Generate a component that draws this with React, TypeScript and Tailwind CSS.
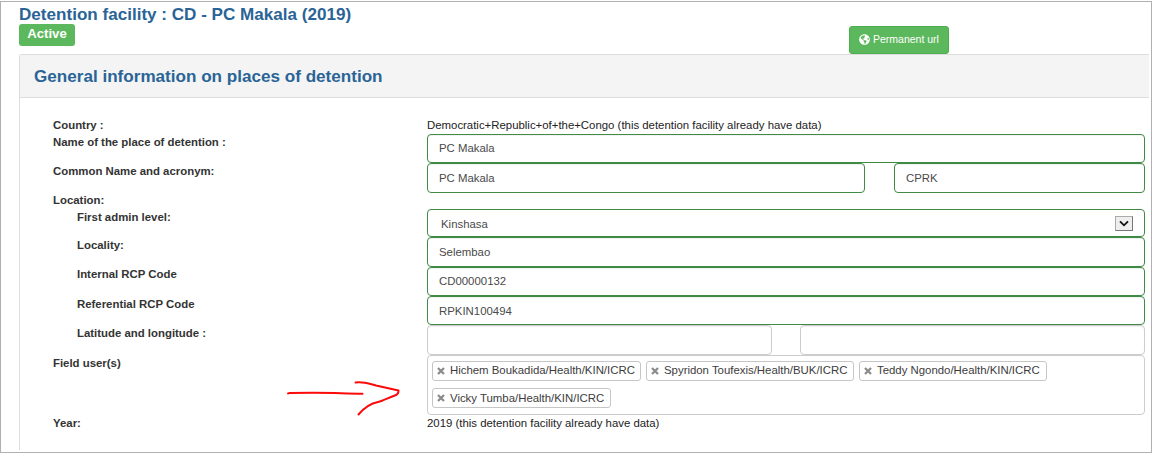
import type { ReactNode } from "react";
import { FaGlobeAmericas } from "react-icons/fa";

function Row({
  label,
  height,
  nested = false,
  raised = false,
  children,
}: {
  label: string;
  height: string;
  nested?: boolean;
  raised?: boolean;
  children?: ReactNode;
}) {
  return (
    <div className={`flex ${height}`}>
      <div
        className={`w-[374px] shrink-0 whitespace-nowrap font-bold text-[#333] ${raised ? "leading-[15px]" : "leading-[17px]"} ${nested ? "pl-6" : ""}`}
      >
        {label}
      </div>
      {children}
    </div>
  );
}

function Field({
  value = "",
  width = "w-[718px]",
  valid = false,
  lowered = false,
}: {
  value?: string;
  width?: string;
  valid?: boolean;
  lowered?: boolean;
}) {
  return (
    <div
      className={`flex h-full shrink-0 items-center rounded border bg-white px-[11px] text-[#4a4a4a] shadow-[inset_0_1px_1px_rgba(0,0,0,0.06)] ${width} ${lowered ? "pt-0.5" : ""} ${valid ? "border-[#3f8a45]" : "border-[#ccc]"}`}
    >
      <span className="leading-[17px]">{value}</span>
    </div>
  );
}

function Chip({ name, width, leading = "leading-[16px]" }: { name: string; width: string; leading?: string }) {
  return (
    <div className={`flex h-5 shrink-0 gap-[5px] rounded-[3px] border border-[#c6c6c6] bg-white pl-1 ${width}`}>
      <svg className="mt-[5px] h-2 w-2" viewBox="0 0 8 8" fill="none" stroke="#8c8c8c" strokeWidth="2.3">
        <path d="M1 1L7 7M7 1L1 7" />
      </svg>
      <span className={`whitespace-nowrap text-[#3c3c3c] ${leading}`}>{name}</span>
    </div>
  );
}

export default function App() {
  return (
    <div className="h-[455px] w-[1154px] overflow-hidden bg-white pt-px font-['Liberation_Sans',Arial,sans-serif] text-[11.4px]">
      <div className="relative h-[452px] w-[1152px] border border-[#b0b0b0] pl-[18px] pr-0.5">
        <header className="flex h-[52px] justify-between">
          <div>
            <h1 className="h-[22px] whitespace-nowrap text-[17.08px] font-bold leading-[25px] text-[#2a6496]">
              Detention facility : CD - PC Makala (2019)
            </h1>
            <div className="flex h-[22px] w-14 justify-center rounded-[3px] bg-[#5cb85c] text-[13.2px] font-bold leading-[20px] text-white">
              Active
            </div>
          </div>
          <button className="mr-[200px] mt-6 flex h-7 w-[100px] items-center gap-[3px] rounded-[3px] border border-[#4cae4c] bg-[#5cb85c] pl-[9px] text-[10.5px] text-white">
            <FaGlobeAmericas className="h-[11px] w-[11px] shrink-0 -translate-y-px" />
            <span className="whitespace-nowrap">Permanent url</span>
          </button>
        </header>

        <main className="h-[396px] rounded-tl-[3px] border-l border-t border-[#ddd]">
          <h2 className="h-[43px] border-b border-[#ddd] bg-[#f4f4f4] pl-3.5 text-[17.1px] font-bold leading-[43px] text-[#2a6496]">
            General information on places of detention
          </h2>
          <div className="pl-[33px] pt-[19px]">
            <Row label="Country :" height="h-[17px]">
              <span className="whitespace-nowrap leading-[17px] text-[#222]">
                Democratic+Republic+of+the+Congo (this detention facility already have data)
              </span>
            </Row>
            <Row label="Name of the place of detention :" height="h-[29px]">
              <Field value="PC Makala" valid />
            </Row>
            <Row label="Common Name and acronym:" height="h-[30px]">
              <div className="flex gap-[29px]">
                <Field value="PC Makala" width="w-[438px]" valid />
                <Field value="CPRK" width="w-[251px]" valid />
              </div>
            </Row>
            <Row label="Location:" height="h-[16px]" raised />
            <Row label="First admin level:" height="h-[28px]" nested>
              <div className="flex h-full w-[718px] items-center justify-between rounded border border-[#3f8a45] pl-[13px] pr-[11px] text-[#4a4a4a]">
                <span className="pt-0.5 leading-[17px]">Kinshasa</span>
                <span className="flex h-[15px] w-[18px] items-center justify-center border border-[#777] border-l-[#aaa] border-t-[#aaa] bg-[#eee]">
                  <svg className="h-[7px] w-[10px]" viewBox="0 0 10 7" fill="none" stroke="#111" strokeWidth="1.8">
                    <path d="M1 1.3L5 5.3L9 1.3" />
                  </svg>
                </span>
              </div>
            </Row>
            <Row label="Locality:" height="h-[30px]" nested>
              <Field value="Selembao" valid />
            </Row>
            <Row label="Internal RCP Code" height="h-[29px]" nested raised>
              <Field value="CD00000132" valid />
            </Row>
            <Row label="Referential RCP Code" height="h-[29px]" nested>
              <Field value="RPKIN100494" valid lowered />
            </Row>
            <Row label="Latitude and longitude :" height="h-[30px]" nested>
              <div className="flex gap-7">
                <Field width="w-[345px]" />
                <Field width="w-[345px]" />
              </div>
            </Row>
            <Row label="Field user(s)" height="h-[60px]">
              <div className="flex w-[718px] flex-wrap content-start gap-x-[5px] gap-y-[7px] rounded border border-[#ccc] pl-1 pt-[5px]">
                <Chip name="Hichem Boukadida/Health/KIN/ICRC" width="w-[209px]" />
                <Chip name="Spyridon Toufexis/Health/BUK/ICRC" width="w-[208px]" />
                <Chip name="Teddy Ngondo/Health/KIN/ICRC" width="w-[188px]" />
                <Chip name="Vicky Tumba/Health/KIN/ICRC" width="w-[179px]" leading="leading-[18px]" />
              </div>
            </Row>
            <Row label="Year:" height="h-[17px]">
              <span className="whitespace-nowrap leading-[17px] text-[#222]">
                2019 (this detention facility already have data)
              </span>
            </Row>
          </div>
        </main>

        <svg
          className="absolute left-[284px] top-[376px] h-[42px] w-[120px]"
          viewBox="285 378 120 42"
          fill="none"
          stroke="#fb0a0a"
          strokeWidth="2"
          strokeLinecap="round"
          strokeLinejoin="round"
        >
          <path d="M288 393.5L290 392.9C305 392.6 322 392.5 335 393C347 393.7 354 393.8 362.500 393.700" />
          <path d="M355.500 382.500C362 381 367 383 376 385.500L398.500 390.500Q398.500 394 396 395C388 398 383 401 378 402C370 403.500 364 408 358.500 414.500" />
        </svg>
      </div>
    </div>
  );
}
